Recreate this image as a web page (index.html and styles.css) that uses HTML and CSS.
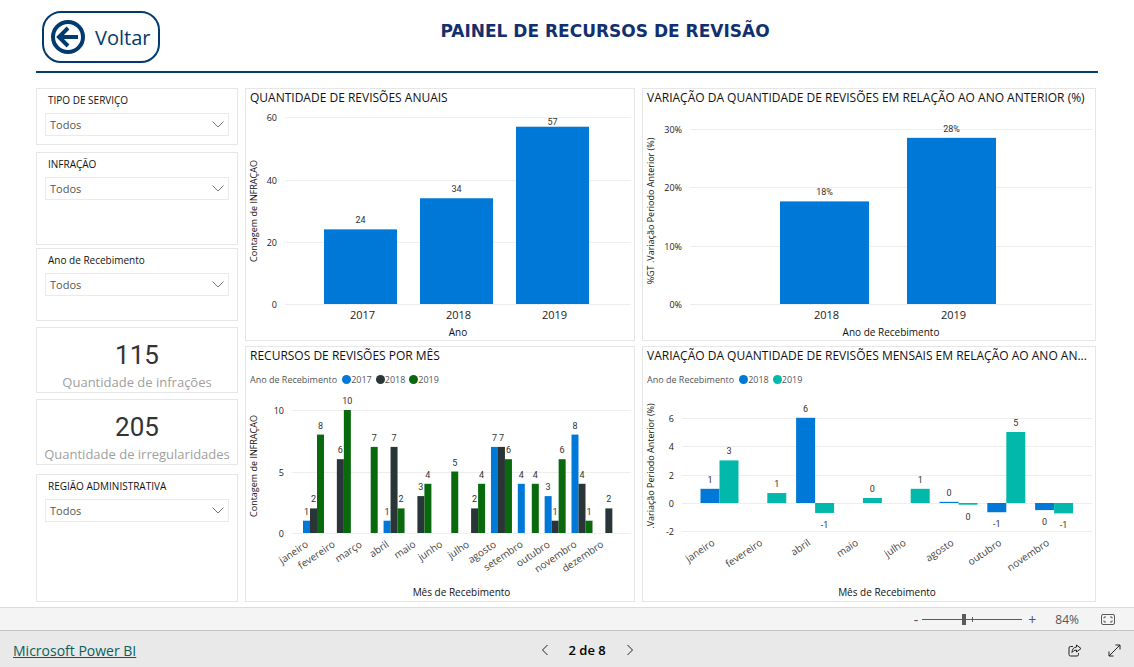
FILE: index.html
```html
<!DOCTYPE html>
<html lang="pt-BR">
<head>
<meta charset="utf-8">
<meta name="viewport" content="width=device-width, initial-scale=1">
<title>Painel de Recursos de Revisão</title>
<link rel="stylesheet" href="styles.css">
</head>
<body>
<div class="report">
  <header class="header">
    <button class="back" type="button">
      <svg class="back-icon" viewBox="0 0 36 36" aria-hidden="true"><circle cx="18" cy="18" r="15" fill="none" stroke="#003b6f" stroke-width="4"/><path d="M28 18H9M18 9l-9 9 9 9" fill="none" stroke="#003b6f" stroke-width="4"/></svg>
      <span>Voltar</span>
    </button>
    <h1 class="title">PAINEL DE RECURSOS DE REVISÃO</h1>
  </header>
  <main class="board">
    <aside class="side">
      <section class="card slicer slicer-service">
        <label for="tipo">TIPO DE SERVIÇO</label>
        <div class="select-box"><select id="tipo"><option>Todos</option></select><svg class="chevron" viewBox="0 0 12 7"><path d="M.5.5 6 6 11.500.5"/></svg></div>
      </section>
      <section class="card slicer slicer-infraction">
        <label for="infracao">INFRAÇÃO</label>
        <div class="select-box"><select id="infracao"><option>Todos</option></select><svg class="chevron" viewBox="0 0 12 7"><path d="M.5.5 6 6 11.500.5"/></svg></div>
      </section>
      <section class="card slicer slicer-year">
        <label for="ano">Ano de Recebimento</label>
        <div class="select-box"><select id="ano"><option>Todos</option></select><svg class="chevron" viewBox="0 0 12 7"><path d="M.5.5 6 6 11.500.5"/></svg></div>
      </section>
      <section class="card kpi"><strong>115</strong><span>Quantidade de infrações</span></section>
      <section class="card kpi"><strong>205</strong><span>Quantidade de irregularidades</span></section>
      <section class="card slicer slicer-region">
        <label for="regiao">REGIÃO ADMINISTRATIVA</label>
        <div class="select-box"><select id="regiao"><option>Todos</option></select><svg class="chevron" viewBox="0 0 12 7"><path d="M.5.5 6 6 11.500.5"/></svg></div>
      </section>
    </aside>
    <section class="card chart">
      <h2>QUANTIDADE DE REVISÕES ANUAIS</h2>
      <svg id="annual" viewBox="0 0 388 233" role="img" aria-label="Quantidade de revisões anuais"></svg>
    </section>
    <section class="card chart">
      <h2>VARIAÇÃO DA QUANTIDADE DE REVISÕES EM RELAÇÃO AO ANO ANTERIOR (%)</h2>
      <svg id="annual-change" viewBox="0 0 452 233" role="img" aria-label="Variação anual"></svg>
    </section>
    <section class="card chart">
      <h2>RECURSOS DE REVISÕES POR MÊS</h2>
      <ul class="legend"><li class="legend-title">Ano de Recebimento</li><li><i class="dot blue"></i>2017</li><li><i class="dot dark"></i>2018</li><li><i class="dot green"></i>2019</li></ul>
      <svg id="monthly" viewBox="0 0 388 206" role="img" aria-label="Recursos de revisões por mês"></svg>
    </section>
    <section class="card chart">
      <h2>VARIAÇÃO DA QUANTIDADE DE REVISÕES MENSAIS EM RELAÇÃO AO ANO AN...</h2>
      <ul class="legend"><li class="legend-title">Ano de Recebimento</li><li><i class="dot blue"></i>2018</li><li><i class="dot teal"></i>2019</li></ul>
      <svg id="monthly-change" viewBox="0 0 452 206" role="img" aria-label="Variação mensal"></svg>
    </section>
  </main>
</div>
<div class="zoombar">
  <button type="button" aria-label="Reduzir">-</button>
  <input type="range" min="0" max="100" value="41" aria-label="Zoom">
  <button type="button" aria-label="Ampliar">+</button>
  <span class="percent">84%</span>
  <button class="fit" type="button" aria-label="Ajustar à página"><svg viewBox="0 0 14 11" width="14" height="11" fill="none" stroke="#5a5a5a"><rect x=".5" y=".5" width="13" height="10" rx="1.500"/><path d="M5 3H3v1.500M9 3h2v1.500M5 8H3V6.500M9 8h2V6.500"/></svg></button>
</div>
<footer class="footer">
  <a href="#">Microsoft Power BI</a>
  <nav class="pager" aria-label="Páginas">
    <button type="button" aria-label="Página anterior"><svg viewBox="0 0 8 12" width="8" height="12"><path d="M6.500 1 1.500 6l5 5"/></svg></button>
    <span>2 de 8</span>
    <button type="button" aria-label="Próxima página"><svg viewBox="0 0 8 12" width="8" height="12"><path d="M1.500 1l5 5-5 5"/></svg></button>
  </nav>
  <div class="actions">
    <button type="button" aria-label="Compartilhar"><svg viewBox="0 0 14 13" width="14" height="13"><path d="M5 2.500H2.500Q1 2.500 1 4v6.500Q1 12 2.500 12H9q1.500 0 1.500-1.500V9"/><path d="M8.500 1 13 4.500 8.500 8V6Q5.500 6 4 8.500 4.200 3.500 8.500 3Z"/></svg></button>
    <button type="button" aria-label="Tela cheia"><svg viewBox="0 0 13 13" width="13" height="13"><path d="M1 12 12 1M7.500 1H12v4.500M1 7.500V12h4.500"/></svg></button>
  </div>
</footer>
<script src="charts.js"></script>
</body>
</html>
```
FILE: styles.css
```css
* { box-sizing: border-box; }
body {
  margin: 0;
  min-height: 100vh;
  display: flex;
  flex-direction: column;
  background: #fff;
  color: #111;
  font-family: "Open Sans", "Noto Sans", sans-serif;
}
button { border: 0; padding: 0; background: none; font: inherit; color: inherit; cursor: pointer; }

.report { flex: 1; padding: 0 36px 5px; }
.header {
  display: grid;
  grid-template-columns: 118px 1fr 48px;
  height: 73px;
  padding: 11px 0 0 6px;
  border-bottom: 2px solid #003f6f;
}
.back {
  display: flex;
  align-items: center;
  gap: 9px;
  height: 52px;
  padding: 0 6px;
  border: 2px solid #003b6f;
  border-radius: 19px;
  color: #003b6f;
  font-size: 20px;
  line-height: 30px;
}
.back span { padding-top: 2px; }
.back-icon { width: 36px; height: 36px; flex: none; }
.title {
  margin: 0;
  padding-top: 8px;
  text-align: center;
  color: #12306f;
  font: 700 17px/24px "DejaVu Sans", sans-serif;
}

.board {
  display: grid;
  grid-template-columns: 202fr 390fr 454fr;
  grid-template-rows: auto auto;
  gap: 5px 7px;
  padding: 15px 2px 0 0;
}
.card { border: 1px solid #e6e6e6; background: #fff; min-width: 0; }
.side { grid-row: span 2; display: flex; flex-direction: column; }

.slicer { padding: 3px 8px; }
.slicer label { display: block; padding: 0 3px; font-size: 10px; line-height: 16px; }
.slicer-service { height: 57px; margin-bottom: 7px; }
.slicer-infraction { height: 93px; margin-bottom: 3px; }
.slicer-year { height: 73px; margin-bottom: 6px; }
.slicer-region { flex: 1; margin-top: 3px; }
.select-box { position: relative; margin-top: 5px; }
.select-box select {
  display: block;
  width: 100%;
  height: 23px;
  padding: 0 4px 1px;
  border: 1px solid #eaeaea;
  border-radius: 0;
  background: #fff;
  color: #555;
  appearance: none;
  font: 11px "Open Sans", sans-serif;
}
.chevron { position: absolute; right: 5px; top: 8px; width: 12px; height: 7px; fill: none; stroke: #777; pointer-events: none; }

.kpi {
  display: flex;
  flex-direction: column;
  align-items: center;
  height: 66px;
  margin-bottom: 6px;
  padding-top: 13px;
  white-space: nowrap;
}
.kpi strong { font: 400 26px/28px Roboto, sans-serif; color: #333; }
.kpi span { font-size: 13px; line-height: 26px; color: #a0a0a0; }

.chart h2 {
  margin: 0;
  padding: 0 4px;
  overflow: hidden;
  text-overflow: ellipsis;
  white-space: nowrap;
  font-size: 12px;
  font-weight: 400;
  line-height: 18px;
}
.chart svg { display: block; width: 100%; height: auto; }
.legend {
  display: flex;
  align-items: center;
  gap: 4px;
  height: 30px;
  margin: 0;
  padding: 0 4px 2px;
  list-style: none;
  color: #555;
  font-size: 9px;
}
.legend li { display: flex; align-items: center; }
.legend-title { margin-right: 1px; }
.dot { width: 9px; height: 9px; border-radius: 50%; }
.blue { background: #0078d7; }
.dark { background: #293537; }
.green { background: #086a0c; }
.teal { background: #01b8aa; }

.grid { stroke: #eee; }
.tick { font-size: 9px; text-anchor: end; fill: #222; }
.category { font-size: 11px; text-anchor: middle; fill: #222; }
.month { font-size: 10px; text-anchor: end; fill: #444; }
.axis { font-size: 10px; text-anchor: middle; fill: #111; }
.axis-y { font-size: 9px; text-anchor: middle; fill: #111; }
.value { font: 9px Roboto, sans-serif; text-anchor: middle; fill: #333; }

.zoombar {
  display: flex;
  align-items: center;
  justify-content: flex-end;
  height: 23px;
  padding-right: 19px;
  border-top: 1px solid #dcdcdc;
  background: #f4f4f4;
  color: #555;
  font-size: 14px;
}
.zoombar input {
  width: 100px;
  height: 12px;
  margin: 0 6px 0 4px;
  appearance: none;
  background:
    linear-gradient(#5a5a5a, #5a5a5a) center / 100% 1px no-repeat,
    linear-gradient(#5a5a5a, #5a5a5a) center / 1px 5px no-repeat;
}
.zoombar input::-webkit-slider-thumb { appearance: none; width: 4px; height: 11px; background: #5a5a5a; }
.percent { margin: 0 22px 0 19px; font-size: 12px; }
.fit { display: flex; }

.footer {
  display: flex;
  align-items: center;
  justify-content: space-between;
  height: 37px;
  padding: 2px 13px 0;
  border-top: 1px solid #c4c4c4;
  background: #e9e9e9;
}
.footer a { color: #08605c; font-size: 14px; }
.footer svg { display: block; fill: none; stroke: #222; }
.pager { display: flex; align-items: center; gap: 20px; color: #000; font-size: 13px; font-weight: 600; }
.actions { display: flex; align-items: center; gap: 26px; padding-left: 30px; }
```
FILE: charts.js
```js
const NS = 'http://www.w3.org/2000/svg';
const MONTHS = ['janeiro', 'fevereiro', 'março', 'abril', 'maio', 'junho', 'julho', 'agosto', 'setembro', 'outubro', 'novembro', 'dezembro'];
const BLUE = '#0078d7', DARK = '#293537', GREEN = '#086a0c', TEAL = '#01b8aa';

function add(svg, tag, attrs, text) {
  const el = document.createElementNS(NS, tag);
  for (const key in attrs) el.setAttribute(key, attrs[key]);
  if (text !== undefined) el.textContent = text;
  svg.appendChild(el);
}

function drawChart(id, c) {
  const svg = document.getElementById(id);
  const y = v => c.zero - v * c.unit;
  const floor = y(Math.min(...c.ticks));
  c.ticks.forEach(t => {
    const ty = Math.round(y(t)) + 0.5;
    add(svg, 'line', { x1: c.left, x2: c.right, y1: ty, y2: ty, class: 'grid' });
    add(svg, 'text', { x: c.left - 8, y: ty + 3, class: 'tick' }, t + (c.suffix || ''));
  });
  c.categories.forEach((name, i) => {
    const x = c.start + i * c.pitch;
    c.series.forEach((s, k) => {
      const v = s.values[i];
      if (v === null) return;
      const bx = x + k * c.bar, top = y(Math.max(v, 0)), h = Math.max(Math.abs(v) * c.unit, 1);
      add(svg, 'rect', { x: bx, y: top, width: c.bar, height: h, fill: s.color });
      const ly = v < 0 ? top + h + 15 : Math.max(top - 6, c.labelTop || 0);
      add(svg, 'text', { x: bx + c.bar / 2, y: ly, class: 'value' }, s.labels ? s.labels[i] : v);
    });
    if (c.slanted) {
      const lx = x + c.labelShift, ly = floor + 13;
      add(svg, 'text', { x: lx, y: ly, transform: `rotate(-34 ${lx} ${ly})`, class: 'month' }, name);
    } else {
      add(svg, 'text', { x: x + c.bar / 2 + 2, y: floor + 15, class: 'category' }, name);
    }
  });
  add(svg, 'text', { x: (c.left + c.right) / 2, y: c.axisY, class: 'axis' }, c.xTitle);
  add(svg, 'text', { x: 11, y: c.yMid, transform: `rotate(-90 11 ${c.yMid})`, class: 'axis-y' }, c.yTitle);
}

drawChart('annual', {
  left: 39, right: 385, zero: 197, unit: 3.11, ticks: [0, 20, 40, 60], start: 78, pitch: 96, bar: 73,
  labelTop: 18, axisY: 229, yMid: 104, xTitle: 'Ano', yTitle: 'Contagem de INFRAÇAO',
  categories: ['2017', '2018', '2019'], series: [{ color: BLUE, values: [24, 34, 57] }]
});
drawChart('annual-change', {
  left: 47, right: 449, zero: 197, unit: 5.83, ticks: [0, 10, 20, 30], suffix: '%', start: 137, pitch: 127, bar: 89,
  axisY: 229, yMid: 104, xTitle: 'Ano de Recebimento', yTitle: '%GT .Variação Periodo Anterior (%)',
  categories: ['2018', '2019'], series: [{ color: BLUE, values: [17.6, 28.5], labels: ['18%', '28%'] }]
});
const _ = null;
drawChart('monthly', {
  left: 46, right: 385, zero: 138, unit: 12.3, ticks: [0, 5, 10], start: 57, pitch: 26.85, bar: 7,
  slanted: true, labelShift: 6, axisY: 201, yMid: 71, xTitle: 'Mês de Recebimento', yTitle: 'Contagem de INFRAÇAO',
  categories: MONTHS, series: [
    { color: BLUE, values: [1, _, _, 1, _, _, _, 7, 4, 3, 8, _] },
    { color: DARK, values: [2, 6, _, 7, 3, _, 2, 7, _, 1, 4, 2] },
    { color: GREEN, values: [8, 10, 7, 2, 4, 5, 4, 6, 4, 6, 1, _] }
  ]
});
drawChart('monthly-change', {
  left: 39, right: 449, zero: 108, unit: 14.2, ticks: [-2, 0, 2, 4, 6], start: 57.5, pitch: 47.8, bar: 19,
  slanted: true, labelShift: 15, axisY: 201, yMid: 71, xTitle: 'Mês de Recebimento', yTitle: '.Variação Periodo Anterior (%)',
  categories: ['janeiro', 'fevereiro', 'abril', 'maio', 'julho', 'agosto', 'outubro', 'novembro'], series: [
    { color: BLUE, values: [1, _, 6, _, _, 0.08, -0.65, -0.5], labels: ['1', _, '6', _, _, '0', '-1', '0'] },
    { color: TEAL, values: [3, 0.7, -0.7, 0.35, 1, -0.12, 5, -0.73], labels: ['3', '1', '-1', '0', '1', '0', '5', '-1'] }
  ]
});
```
